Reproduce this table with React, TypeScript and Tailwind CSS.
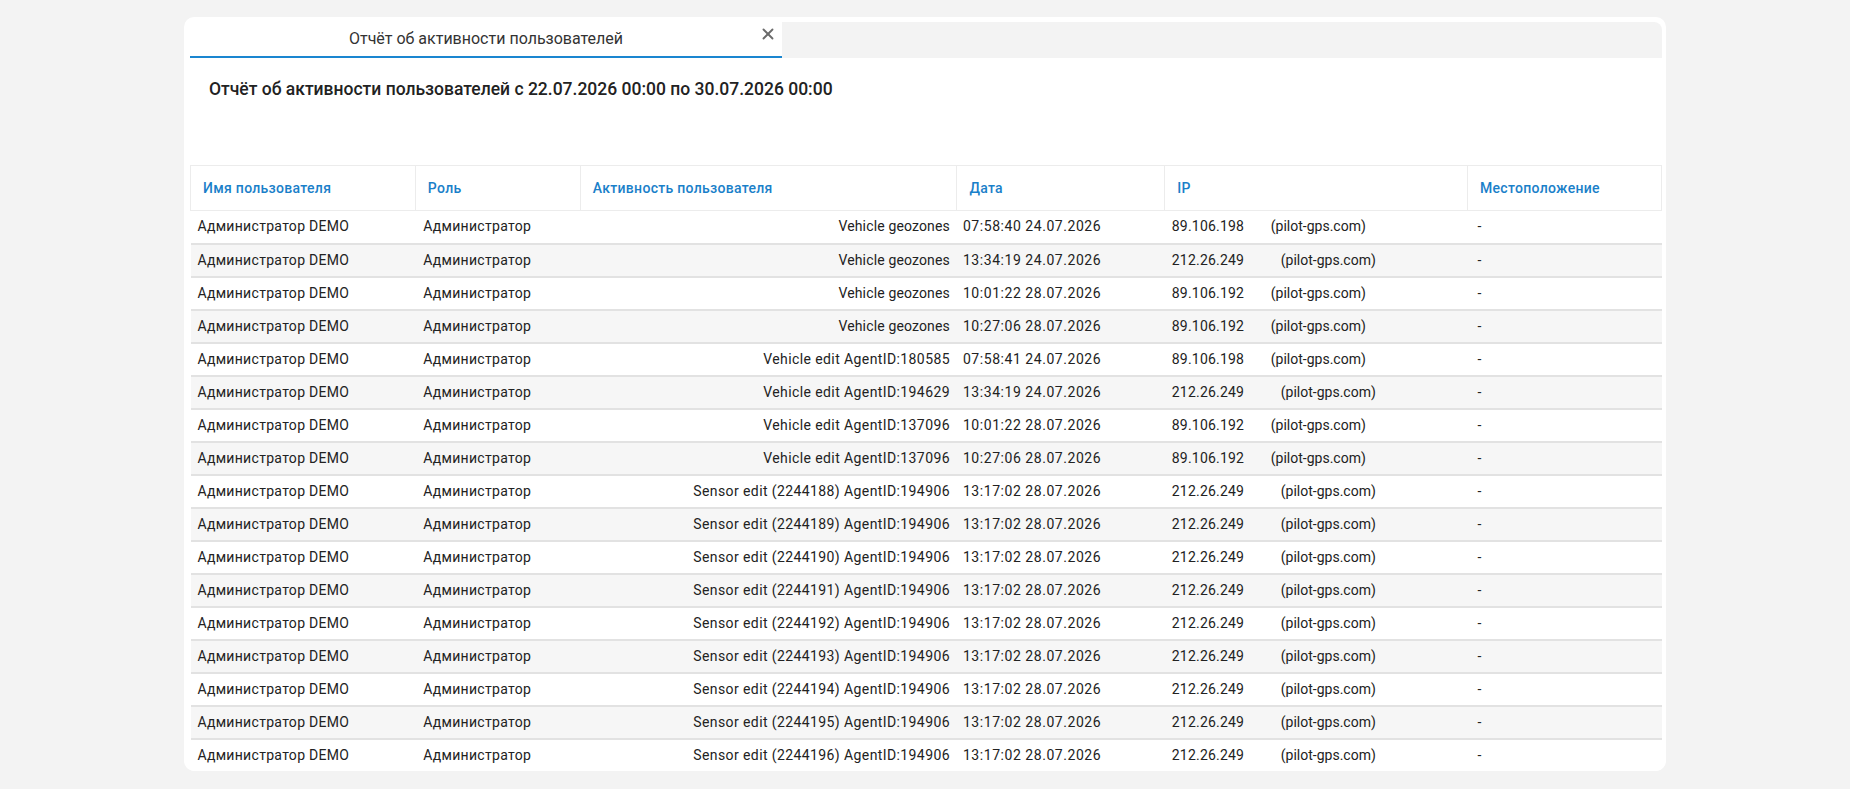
import { X } from "lucide-react";

type Row = { act: string; date: string; ip: string; wide: boolean };

const rows: Row[] = [
  { act: "Vehicle geozones", date: "07:58:40 24.07.2026", ip: "89.106.198", wide: false },
  { act: "Vehicle geozones", date: "13:34:19 24.07.2026", ip: "212.26.249", wide: true },
  { act: "Vehicle geozones", date: "10:01:22 28.07.2026", ip: "89.106.192", wide: false },
  { act: "Vehicle geozones", date: "10:27:06 28.07.2026", ip: "89.106.192", wide: false },
  { act: "Vehicle edit AgentID:180585", date: "07:58:41 24.07.2026", ip: "89.106.198", wide: false },
  { act: "Vehicle edit AgentID:194629", date: "13:34:19 24.07.2026", ip: "212.26.249", wide: true },
  { act: "Vehicle edit AgentID:137096", date: "10:01:22 28.07.2026", ip: "89.106.192", wide: false },
  { act: "Vehicle edit AgentID:137096", date: "10:27:06 28.07.2026", ip: "89.106.192", wide: false },
  ...[188, 189, 190, 191, 192, 193, 194, 195, 196].map((n) => ({
    act: `Sensor edit (2244${n}) AgentID:194906`,
    date: "13:17:02 28.07.2026",
    ip: "212.26.249",
    wide: true,
  })),
];

const headers = [
  { label: "Имя пользователя", w: "w-[225px]" },
  { label: "Роль", w: "w-[165px]" },
  { label: "Активность пользователя", w: "w-[377px]" },
  { label: "Дата", w: "w-[208px]" },
  { label: "IP", w: "w-[303px]" },
  { label: "Местоположение", w: "w-[194px]" },
];

export default function App() {
  return (
    <div className="min-h-screen bg-[#f3f3f3] pt-[17px] pl-[184px]" style={{ fontFamily: "Roboto, 'Liberation Sans', sans-serif" }}>
      <div className="w-[1482px] h-[754px] bg-white rounded-[10px] pl-[6px] pr-[4px] pt-[5px] overflow-hidden">
        {/* tabs */}
        <div className="flex h-[36px] bg-[#f3f3f3] rounded-tr-[8px]">
          <div className="relative w-[592px] bg-white border-b-2 border-[#1a86d0] flex items-center justify-center text-[16px] text-[#333]">
            Отчёт об активности пользователей
            <X size={18} strokeWidth={2.5} className="absolute right-[5px] top-[3px] text-[#6b6b6b]" />
          </div>
        </div>

        <div className="h-[107px] pl-[19px] pt-[18px] text-[17.5px] font-medium text-[#222]">
          Отчёт об активности пользователей с 22.07.2026 00:00 по 30.07.2026 00:00
        </div>

        <table className="border-collapse text-[14px] tracking-[0.3px] text-[#222] table-fixed">
          <thead>
            <tr className="h-[45px]">
              {headers.map((h) => (
                <th
                  key={h.label}
                  className={`${h.w} border border-[#ececec] text-left font-medium text-[#1a80c9] pl-[12px] tracking-[0.3px]`}
                >
                  {h.label}
                </th>
              ))}
            </tr>
          </thead>
          <tbody>
            {rows.map((r, i) => (
              <tr key={i} className={`h-[33px] ${i % 2 ? "bg-[#f6f6f6]" : "bg-white"} ${i < rows.length - 1 ? "border-b-2 border-[#e2e2e2]" : ""}`}>
                <td className="pl-[7px]">Администратор DEMO</td>
                <td className="pl-[8px]">Администратор</td>
                <td className={`text-right pr-[7px] ${r.act.includes("geozones") ? "tracking-[0.15px]" : "tracking-[0.4px]"}`}>{r.act}</td>
                <td className="pl-[6px] tracking-[0.55px]">{r.date}</td>
                <td className="pl-[7px] tracking-normal">
                  <span className={`inline-block tracking-[0.2px] ${r.wide ? "w-[109px]" : "w-[99px]"}`}>{r.ip}</span>
                  (pilot-gps.com)
                </td>
                <td className="pl-[10px]">-</td>
              </tr>
            ))}
          </tbody>
        </table>
      </div>
    </div>
  );
}
